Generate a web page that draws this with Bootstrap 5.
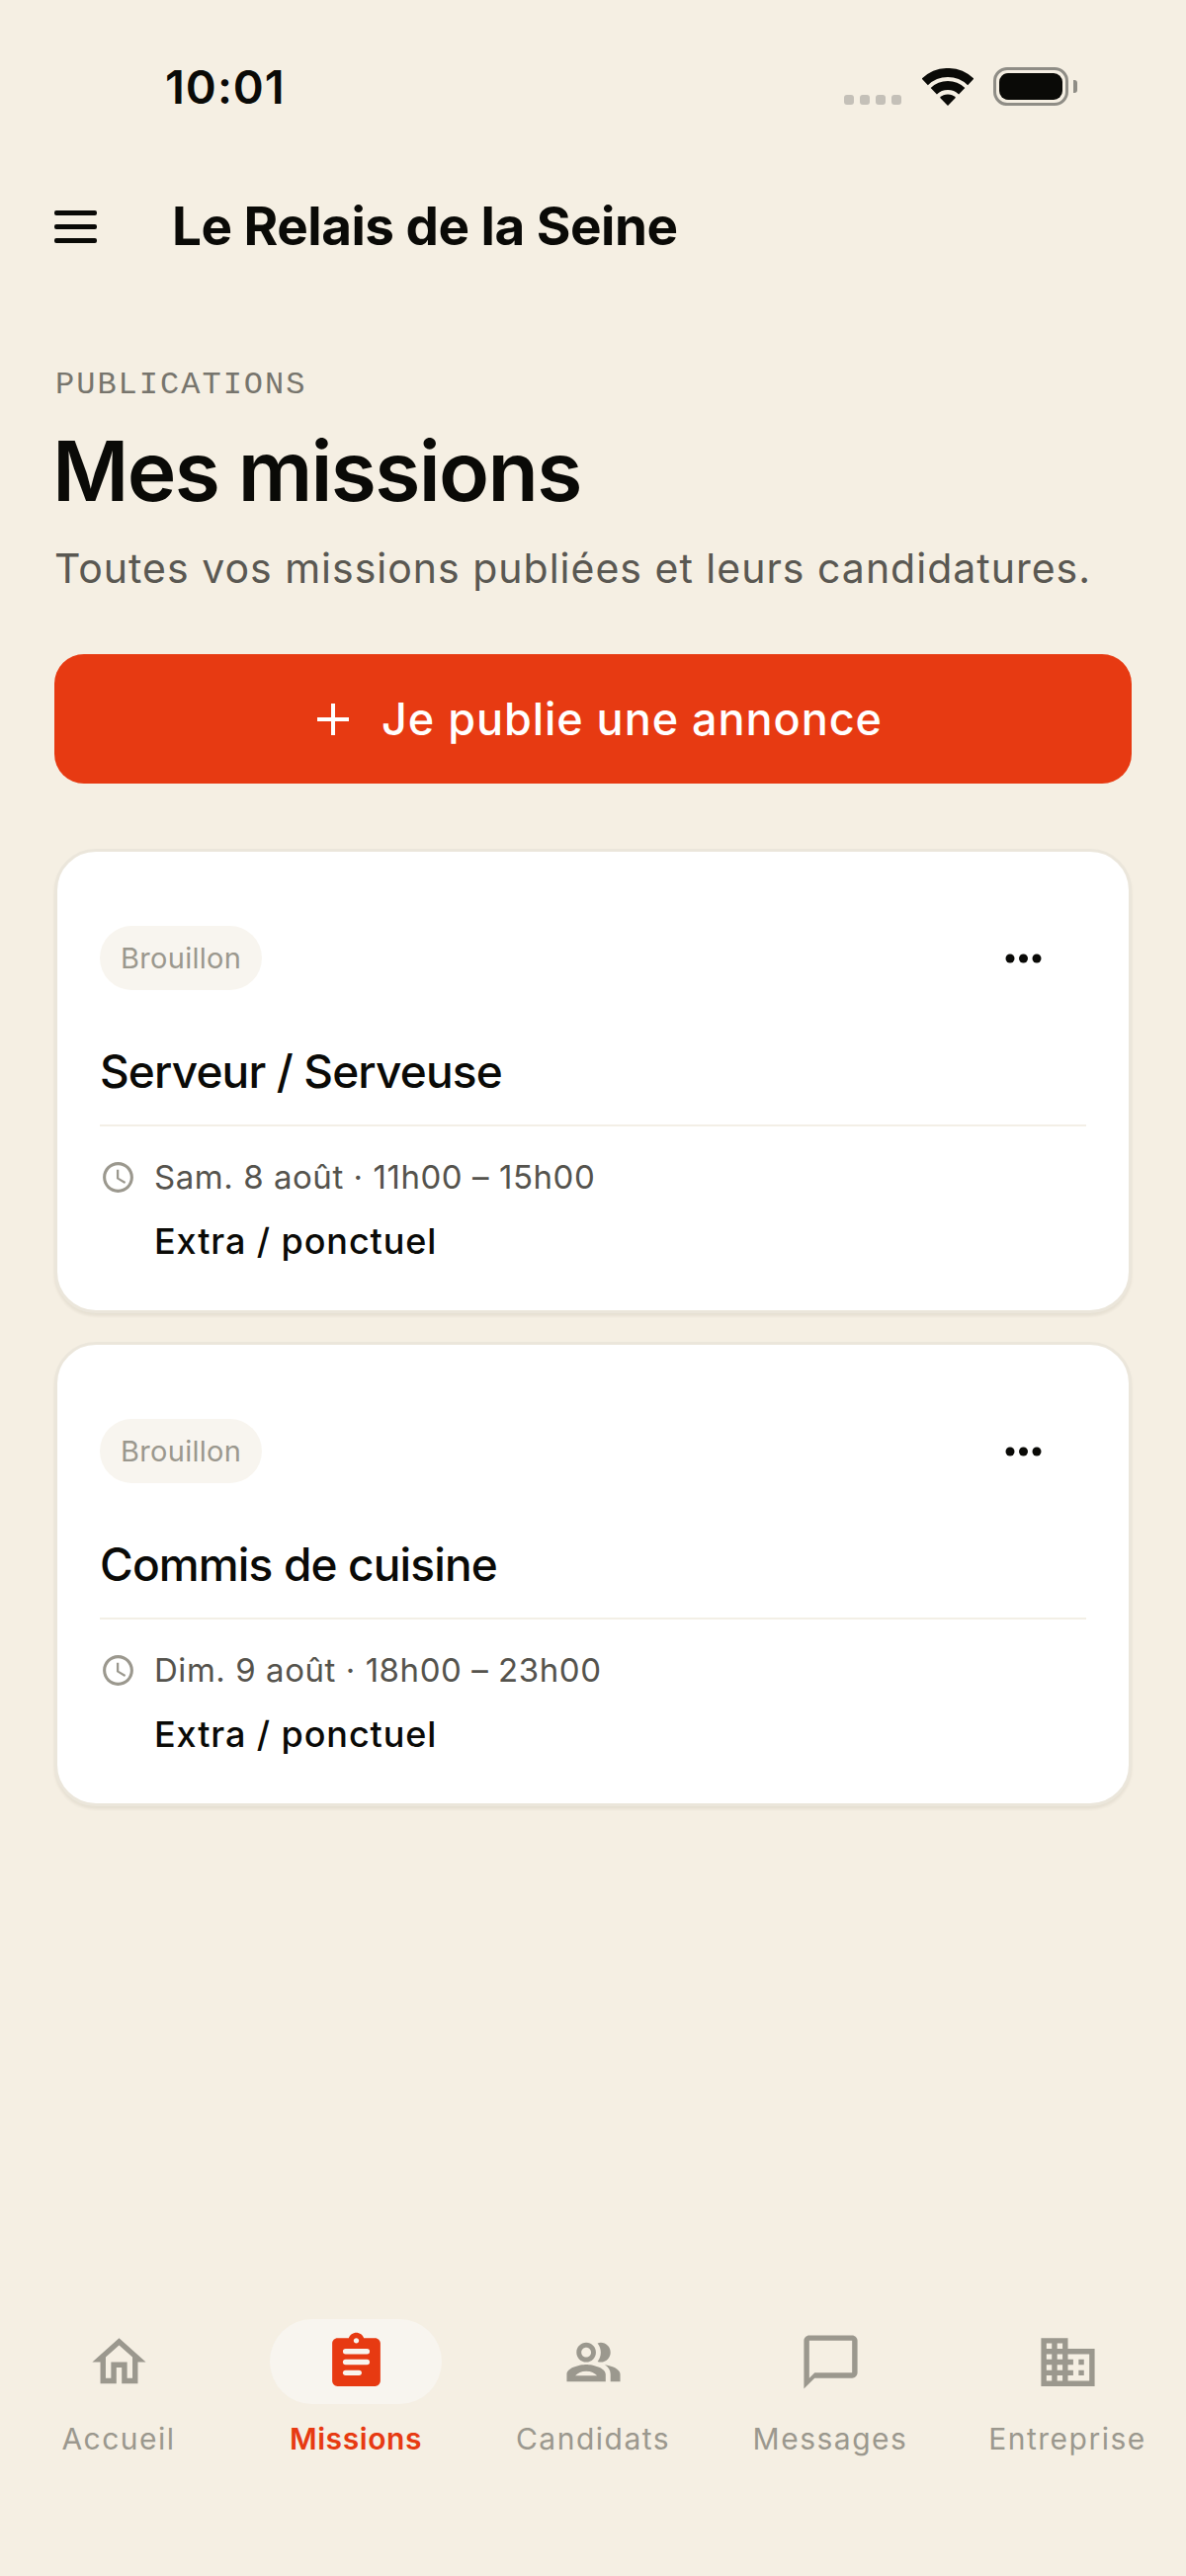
<!DOCTYPE html>
<html lang="fr">
<head>
<meta charset="utf-8">
<title>Mes missions</title>
<link href="https://cdn.jsdelivr.net/npm/bootstrap@5.3.0/dist/css/bootstrap.min.css" rel="stylesheet">
<style>
body{background:#f5efe3;font-family:Inter,"Liberation Sans",sans-serif;color:#0a0a07;}
.screen{width:1200px;min-height:2607px;}
.status{height:178px;padding:0 110px 3px 167px;}
.clock-time{font-size:47px;font-weight:600;letter-spacing:1px;line-height:1;}
.sig-dot{width:10px;height:10px;border-radius:3px;background:#c4c0b8;}
.sig{gap:6px;margin-top:26px;margin-right:21px;}
.batt{width:76px;height:39px;border:3px solid #8f8d86;border-radius:14px;padding:3px;margin-left:20px;}
.batt-fill{background:#0a0a07;border-radius:9px;}
.batt-nub{width:4px;height:13px;background:#8f8d86;border-radius:0 3px 3px 0;margin-left:5px;}
.topbar{height:102px;padding:0 55px;}
.brand{font-size:53px;font-weight:700;letter-spacing:-.5px;margin-left:76px;line-height:1;}
.main-col{padding:0 55px;}
.eyebrow{font-family:"Liberation Mono",monospace;font-size:32px;letter-spacing:2px;color:#77756d;line-height:36px;margin:92px 0 0 1px;}
.page-title{font-size:84px;font-weight:600;letter-spacing:-1.7px;line-height:100px;margin:19px 0 0 -2px;}
.page-sub{font-size:41px;font-weight:400;color:#5a5852;line-height:50px;margin:23px 0 0;letter-spacing:1px;}
.btn-cta{background:#e73a12;color:#fff;border:0;border-radius:30px;height:131px;font-size:45px;font-weight:500;margin-top:62px;letter-spacing:.95px;gap:33px;padding-left:26px;}
.btn-cta:hover{background:#e73a12;color:#fff;}
.mission{border:3px solid #ebe6db;border-radius:42px;box-shadow:0 3px 3px rgba(60,50,30,.08);height:470px;padding:75px 43px 0;margin-bottom:29px;}
.mission-list{margin-top:66px;}
.chip{background:#f8f5ef;color:#9b988e;font-size:29px;font-weight:400;border-radius:33px;height:65px;line-height:65px;padding:0 21px;letter-spacing:.3px;}
.title-row{font-size:46px;font-weight:500;line-height:60px;margin:52px 0 0;letter-spacing:-.85px;}
.sep{border-top:2px solid #f3efe6;margin:24px 0 0;opacity:1;}
.when{color:#55534d;font-size:33px;line-height:44px;margin-top:29px;letter-spacing:.55px;gap:18px;}
.dots{margin-right:31px;}
.ctype{font-size:36px;font-weight:500;line-height:44px;margin:21px 0 0 55px;letter-spacing:.9px;}
.tabbar{margin-top:auto;padding-bottom:119px;}
.tab{width:240px;color:#9b988e;font-size:30px;letter-spacing:1.5px;line-height:40px;}
.tab-on{color:#e73a12;font-weight:600;letter-spacing:.6px;}
.tab-ico{height:86px;width:174px;border-radius:43px;margin-bottom:15px;}
.tab-on .tab-ico{background:#f8f5ef;}
</style>
</head>
<body>
<div class="screen d-flex flex-column">
  <div class="status d-flex align-items-center justify-content-between">
    <span class="clock-time">10:01</span>
    <div class="d-flex align-items-center">
      <div class="sig d-flex"><i class="sig-dot"></i><i class="sig-dot"></i><i class="sig-dot"></i><i class="sig-dot"></i></div>
      <svg width="52" height="38" viewBox="0 0 52 38" fill="none" stroke="#0a0a07" stroke-width="9"><path d="M2.7 13.9A33.5 33.5 0 0 1 49.3 13.9"/><path d="M11.8 23.3A20.5 20.5 0 0 1 40.2 23.3"/><path d="M26 38L18 29.7A11.5 11.5 0 0 1 34 29.7Z" fill="#0a0a07" stroke="none"/></svg>
      <div class="batt d-flex"><div class="batt-fill flex-grow-1"></div></div>
      <div class="batt-nub"></div>
    </div>
  </div>
  <div class="topbar d-flex align-items-center">
    <svg width="43" height="33" viewBox="0 0 43 33" fill="#0a0a07"><rect y="0" width="43" height="5" rx="2"/><rect y="14" width="43" height="5" rx="2"/><rect y="28" width="43" height="5" rx="2"/></svg>
    <span class="brand">Le Relais de la Seine</span>
  </div>
  <div class="main-col">
    <div class="eyebrow">PUBLICATIONS</div>
    <h1 class="page-title">Mes missions</h1>
    <p class="page-sub">Toutes vos missions publiées et leurs candidatures.</p>
    <button class="btn btn-cta w-100 d-flex align-items-center justify-content-center">
      <svg width="32" height="32" viewBox="0 0 32 32" stroke="#fff" stroke-width="4"><path d="M0 16H32M16 0V32"/></svg>
      <span>Je publie une annonce</span>
    </button>
    <div class="mission-list">
      <div class="card mission bg-white">
        <div class="d-flex justify-content-between align-items-center">
          <span class="chip">Brouillon</span>
          <svg class="dots" width="64" height="64" viewBox="0 0 64 64" fill="#0a0a07"><circle cx="18" cy="32" r="4.5"/><circle cx="31.5" cy="32" r="4.5"/><circle cx="45" cy="32" r="4.5"/></svg>
        </div>
        <div class="title-row">Serveur / Serveuse</div>
        <hr class="sep">
        <div class="when d-flex align-items-center">
          <svg width="37" height="37" viewBox="0 0 24 24" fill="#9b988e"><path d="M11.99 2C6.47 2 2 6.48 2 12s4.47 10 9.99 10C17.52 22 22 17.52 22 12S17.52 2 11.99 2zM12 20c-4.42 0-8-3.58-8-8s3.58-8 8-8 8 3.58 8 8-3.58 8-8 8zm.5-13H11v6l5.25 3.15.75-1.23-4.5-2.67z"/></svg>
          <span>Sam. 8 août · 11h00 – 15h00</span>
        </div>
        <div class="ctype">Extra / ponctuel</div>
      </div>
      <div class="card mission bg-white">
        <div class="d-flex justify-content-between align-items-center">
          <span class="chip">Brouillon</span>
          <svg class="dots" width="64" height="64" viewBox="0 0 64 64" fill="#0a0a07"><circle cx="18" cy="32" r="4.5"/><circle cx="31.5" cy="32" r="4.5"/><circle cx="45" cy="32" r="4.5"/></svg>
        </div>
        <div class="title-row">Commis de cuisine</div>
        <hr class="sep">
        <div class="when d-flex align-items-center">
          <svg width="37" height="37" viewBox="0 0 24 24" fill="#9b988e"><path d="M11.99 2C6.47 2 2 6.48 2 12s4.47 10 9.99 10C17.52 22 22 17.52 22 12S17.52 2 11.99 2zM12 20c-4.42 0-8-3.58-8-8s3.58-8 8-8 8 3.58 8 8-3.58 8-8 8zm.5-13H11v6l5.25 3.15.75-1.23-4.5-2.67z"/></svg>
          <span>Dim. 9 août · 18h00 – 23h00</span>
        </div>
        <div class="ctype">Extra / ponctuel</div>
      </div>
    </div>
  </div>
  <nav class="tabbar d-flex">
    <a class="tab text-center text-decoration-none d-flex flex-column align-items-center">
      <span class="tab-ico d-flex align-items-center justify-content-center"><svg width="65" height="65" viewBox="0 0 24 24" fill="#9b988e"><path d="M12 5.69l5 4.5V18h-2v-6H9v6H7v-7.81l5-4.5M12 3L2 12h3v8h6v-6h2v6h6v-8h3L12 3z"/></svg></span>Accueil
    </a>
    <a class="tab tab-on text-center text-decoration-none d-flex flex-column align-items-center">
      <span class="tab-ico d-flex align-items-center justify-content-center"><svg width="65" height="65" viewBox="0 0 24 24"><path fill="#e73a12" fill-rule="evenodd" d="M19 3h-4.18C14.4 1.84 13.3 1 12 1c-1.3 0-2.4.84-2.82 2H5c-1.1 0-2 .9-2 2v14c0 1.1.9 2 2 2h14c1.1 0 2-.9 2-2V5c0-1.1-.9-2-2-2zm-7 0c.55 0 1 .45 1 1s-.45 1-1 1-1-.45-1-1 .45-1 1-1z"/><g fill="#f8f5ef"><rect x="7" y="7" width="10" height="2" rx="1"/><rect x="7" y="11" width="10" height="2" rx="1"/><rect x="7" y="15" width="7" height="2" rx="1"/></g></svg></span>Missions
    </a>
    <a class="tab text-center text-decoration-none d-flex flex-column align-items-center">
      <span class="tab-ico d-flex align-items-center justify-content-center"><svg width="59" height="59" viewBox="0 0 24 24" fill="#9b988e"><path d="M16.67 13.13C18.04 14.06 19 15.32 19 17v3h4v-3c0-2.18-3.57-3.47-6.33-3.87z"/><path d="M15 12c2.21 0 4-1.79 4-4s-1.79-4-4-4c-.47 0-.91.1-1.33.24C14.5 5.27 15 6.58 15 8s-.5 2.73-1.33 3.76c.42.14.86.24 1.33.24z"/><path d="M9 12c2.21 0 4-1.79 4-4s-1.79-4-4-4-4 1.79-4 4 1.79 4 4 4zm0-6c1.1 0 2 .9 2 2s-.9 2-2 2-2-.9-2-2 .9-2 2-2z"/><path d="M9 13c-2.67 0-8 1.34-8 4v3h16v-3c0-2.66-5.33-4-8-4zm4.5 4.6H4.5C5.5 16.6 7 15.8 9 15.8s3.5.8 4.5 1.8z"/></svg></span>Candidats
    </a>
    <a class="tab text-center text-decoration-none d-flex flex-column align-items-center">
      <span class="tab-ico d-flex align-items-center justify-content-center"><svg width="65" height="65" viewBox="0 0 24 24" fill="#9b988e"><path d="M20 2H4c-1.1 0-2 .9-2 2v18l4-4h14c1.1 0 2-.9 2-2V4c0-1.1-.9-2-2-2zm0 14H6l-2 2V4h16v12z"/></svg></span>Messages
    </a>
    <a class="tab text-center text-decoration-none d-flex flex-column align-items-center">
      <span class="tab-ico d-flex align-items-center justify-content-center"><svg width="65" height="65" viewBox="0 0 24 24" fill="#9b988e"><path d="M12 7V3H2v18h20V7H12zM6 19H4v-2h2v2zm0-4H4v-2h2v2zm0-4H4V9h2v2zm0-4H4V5h2v2zm4 12H8v-2h2v2zm0-4H8v-2h2v2zm0-4H8V9h2v2zm0-4H8V5h2v2zm10 12h-8v-2h2v-2h-2v-2h2v-2h-2V9h8v10zm-2-8h-2v2h2v-2zm0 4h-2v2h2v-2z"/></svg></span>Entreprise
    </a>
  </nav>
</div>
<script src="https://cdn.jsdelivr.net/npm/bootstrap@5.3.0/dist/js/bootstrap.bundle.min.js"></script>
</body>
</html>
